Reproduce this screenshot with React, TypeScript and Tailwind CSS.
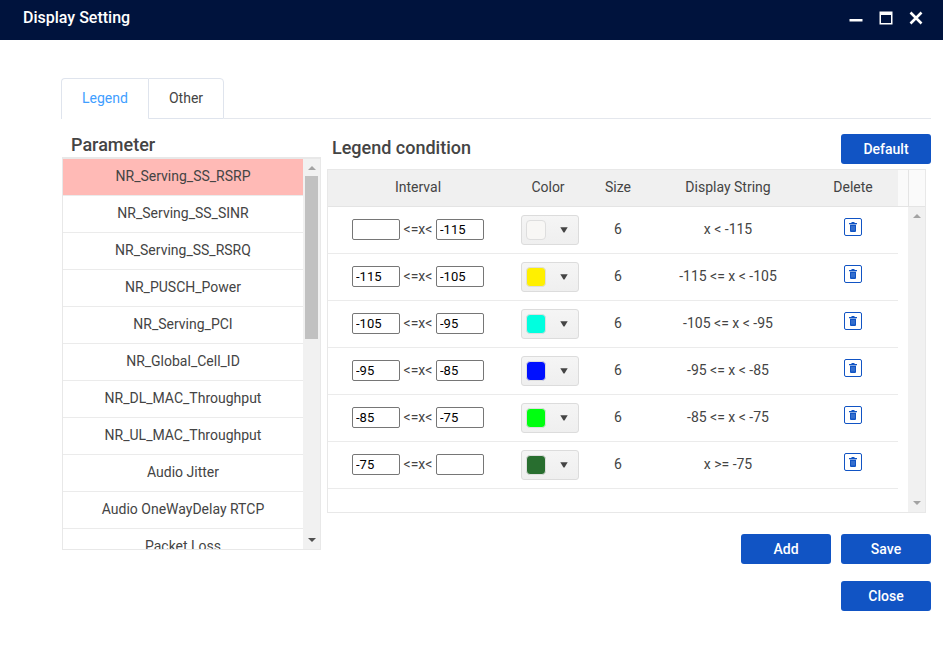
import { useState } from "react";

const parameters = [
  "NR_Serving_SS_RSRP",
  "NR_Serving_SS_SINR",
  "NR_Serving_SS_RSRQ",
  "NR_PUSCH_Power",
  "NR_Serving_PCI",
  "NR_Global_Cell_ID",
  "NR_DL_MAC_Throughput",
  "NR_UL_MAC_Throughput",
  "Audio Jitter",
  "Audio OneWayDelay RTCP",
  "Packet Loss",
];

const rows = [
  { from: "", to: "-115", color: "bg-[#f8f7f5]", name: "white", size: 6, text: "x < -115" },
  { from: "-115", to: "-105", color: "bg-[#fff000]", name: "yellow", size: 6, text: "-115 <= x < -105" },
  { from: "-105", to: "-95", color: "bg-[#00ffdf]", name: "cyan", size: 6, text: "-105 <= x < -95" },
  { from: "-95", to: "-85", color: "bg-[#0010ff]", name: "blue", size: 6, text: "-95 <= x < -85" },
  { from: "-85", to: "-75", color: "bg-[#00ff10]", name: "green", size: 6, text: "-85 <= x < -75" },
  { from: "-75", to: "", color: "bg-[#286e2f]", name: "dark green", size: 6, text: "x >= -75" },
];

function Arrow({ up = false, className }: { up?: boolean; className: string }) {
  return (
    <svg viewBox="0 0 8 4" className={`h-1 w-2 ${className}`} fill="currentColor" aria-hidden="true">
      <path d={up ? "M4 0 8 4H0z" : "M0 0h8L4 4z"} />
    </svg>
  );
}

function PrimaryButton({ children }: { children: string }) {
  return (
    <button
      type="button"
      className="h-[30px] w-[90px] rounded-[3px] bg-[#1154c4] text-sm font-medium text-white"
    >
      {children}
    </button>
  );
}

function TrashIcon() {
  return (
    <svg viewBox="0 0 8 10" className="h-2.5 w-2" aria-hidden="true">
      <path fill="#1154c4" d="M2.500 0h3v1H8v1.300H0V1h2.500zM1 2.800h6V9q0 1-1 1H2Q1 10 1 9z" />
      <path stroke="#8fb0e6" strokeWidth=".6" d="M3 4v4.500M5 4v4.500" />
    </svg>
  );
}

function TitleBar() {
  return (
    <header className="flex h-10 items-center justify-between bg-[#00133d] pr-5 pl-[23px] text-white">
      <h1 className="pb-1 text-base font-medium">Display Setting</h1>
      <div className="flex gap-4 pb-1">
        <button type="button" aria-label="Minimize" className="h-[14px] w-[14px]">
          <svg viewBox="0 0 14 14" className="block h-[14px] w-[14px]">
            <path fill="white" d="M.5 8h13v2.500H.5z" />
          </svg>
        </button>
        <button type="button" aria-label="Maximize" className="h-[14px] w-[14px]">
          <svg viewBox="0 0 14 14" className="block h-[14px] w-[14px]">
            <path fill="white" fillRule="evenodd" d="M.5 .5h13v13H.5zM2 4v8h10V4z" />
          </svg>
        </button>
        <button type="button" aria-label="Close window" className="h-[14px] w-[14px]">
          <svg viewBox="0 0 14 14" className="block h-[14px] w-[14px]">
            <path stroke="white" strokeWidth="2.600" d="m1.500 1.500 11 11m0-11-11 11" />
          </svg>
        </button>
      </div>
    </header>
  );
}

function ParameterPanel() {
  const [active, setActive] = useState(0);
  return (
    <section className="w-[259px] shrink-0">
      <h2 className="mt-[15px] mb-px pl-[9px] text-lg leading-[22px] font-medium">Parameter</h2>
      <div className="flex h-[393px] overflow-hidden border border-t-2 border-[#e8e8e8]">
        <ul className="min-w-0 flex-1">
          {parameters.map((name, i) => (
            <li key={name}>
              <button
                type="button"
                onClick={() => setActive(i)}
                className={`block h-[37px] w-full border-b border-[#ebebeb] pb-0.5 text-center ${
                  i === active ? "bg-[#ffbab6]" : "bg-white"
                }`}
              >
                {name}
              </button>
            </li>
          ))}
        </ul>
        <div className="flex w-[17px] flex-col items-center bg-[#f1f1f1]">
          <div className="flex h-[17px] items-center">
            <Arrow up className="text-[#a3a3a3]" />
          </div>
          <div className="h-[163px] w-[13px] bg-[#c1c1c1]" />
          <div className="mt-auto flex h-[18px] items-center">
            <Arrow className="text-[#505050]" />
          </div>
        </div>
      </div>
    </section>
  );
}

function Bound({ label, value }: { label: string; value: string }) {
  return (
    <input
      aria-label={label}
      defaultValue={value}
      className="h-[21px] w-12 rounded-[2px] border border-[#767676] px-[3px] text-[13px] text-black"
    />
  );
}

function LegendPanel() {
  return (
    <section className="min-w-0 flex-1">
      <div className="flex h-[50px] items-start justify-between pt-[15px]">
        <h2 className="pl-[5px] text-lg leading-7 font-medium">Legend condition</h2>
        <PrimaryButton>Default</PrimaryButton>
      </div>
      <div className="mr-[5px] flex h-[344px] border border-[#e8e8e8]">
        <div className="min-w-0 flex-1">
          <table className="w-full table-fixed border-separate border-spacing-0 text-center">
            <colgroup>
              <col className="w-[180px]" />
              <col className="w-[80px]" />
              <col className="w-[60px]" />
              <col className="w-[160px]" />
              <col className="w-[90px]" />
            </colgroup>
            <thead>
              <tr className="h-[37px] bg-[#f0f0f0]">
                {["Interval", "Color", "Size", "Display String", "Delete"].map((title) => (
                  <th key={title} className="border-b border-[#e4e4e4] p-0 pb-[3px] font-normal">
                    {title}
                  </th>
                ))}
              </tr>
            </thead>
            <tbody>
              {rows.map((row) => (
                <tr key={row.text} className="h-[47px]">
                  <td className="border-b border-[#ebebeb] p-0 pb-0.5">
                    <div className="flex items-center justify-center">
                      <Bound label="Lower bound" value={row.from} />
                      <span className="w-9">{"<=x<"}</span>
                      <Bound label="Upper bound" value={row.to} />
                    </div>
                  </td>
                  <td className="border-b border-[#ebebeb] p-0 pl-1">
                    <button
                      type="button"
                      aria-label={`Color: ${row.name}`}
                      className="mx-auto flex h-[30px] w-[58px] items-center justify-between rounded-[3px] border border-[#dcdcdc] bg-linear-to-b from-[#f5f5f5] to-[#efefef] pr-[10px] pl-1"
                    >
                      <span className={`h-5 w-5 rounded-[4px] border border-[#dedede] ${row.color}`} />
                      <svg viewBox="0 0 8 6" className="h-1.5 w-2" fill="#444444" aria-hidden="true">
                        <path d="M.3 .300h7.400L4.500 5.500h-1z" />
                      </svg>
                    </button>
                  </td>
                  <td className="border-b border-[#ebebeb] p-0 pb-0.5">{row.size}</td>
                  <td className="border-b border-[#ebebeb] p-0 pb-0.5">{row.text}</td>
                  <td className="border-b border-[#ebebeb] p-0 pb-1.5">
                    <button
                      type="button"
                      aria-label={`Delete ${row.text}`}
                      className="mx-auto flex h-[18px] w-[18px] items-center justify-center rounded-[2px] border border-[#1154c4] bg-white"
                    >
                      <TrashIcon />
                    </button>
                  </td>
                </tr>
              ))}
            </tbody>
          </table>
        </div>
        <div className="w-[10px]">
          <div className="h-[37px] border-b border-[#e4e4e4] bg-[#fafafa]" />
        </div>
        <div className="flex w-[17px] flex-col items-center bg-[#f1f1f1] text-[#a3a3a3]">
          <div className="h-[37px] w-full border-b border-l border-[#e4e4e4] bg-[#fafafa]" />
          <div className="flex h-[17px] items-center">
            <Arrow up className="" />
          </div>
          <div className="mt-auto flex h-[18px] items-center">
            <Arrow className="" />
          </div>
        </div>
      </div>
      <div className="mt-[21px] flex flex-wrap justify-end gap-[10px]">
        <PrimaryButton>Add</PrimaryButton>
        <PrimaryButton>Save</PrimaryButton>
      </div>
      <div className="mt-[17px] flex justify-end">
        <PrimaryButton>Close</PrimaryButton>
      </div>
    </section>
  );
}

export default function App() {
  return (
    <div className="min-h-screen bg-white font-[Roboto,sans-serif] text-sm text-[#444444]">
      <TitleBar />
      <main className="pt-[38px] pr-3 pl-[61px]">
        <div role="tablist" className="flex h-[41px] items-stretch">
          <button
            type="button"
            role="tab"
            aria-selected="true"
            className="w-[87px] rounded-tl-[4px] border-t border-l border-[#dfe4ed] pb-[3px] text-[#409eff]"
          >
            Legend
          </button>
          <button
            type="button"
            role="tab"
            aria-selected="false"
            className="w-[76px] rounded-tr-[4px] border border-[#dfe4ed] pb-0.5"
          >
            Other
          </button>
          <div className="flex-1 border-b border-[#e4e7ed]" />
        </div>
        <div className="flex gap-[6px] pl-px">
          <ParameterPanel />
          <LegendPanel />
        </div>
      </main>
    </div>
  );
}
